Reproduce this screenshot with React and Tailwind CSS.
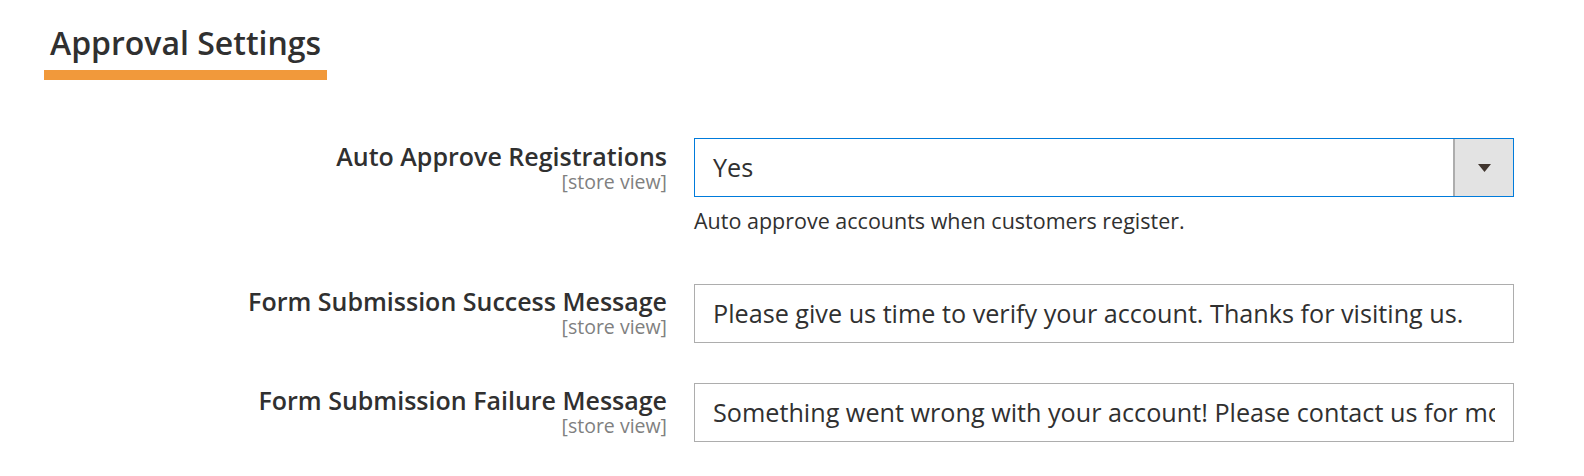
export default function App() {
  const font = { fontFamily: '"Open Sans", "Noto Sans", sans-serif' };
  return (
    <div className="w-[1584px] h-[476px] bg-white text-[#303030] overflow-hidden" style={font}>
      <div className="pl-[44px] pt-[18px]">
        <div className="inline-block">
          <h2 className="px-[6px] text-[32px] leading-[50px] font-semibold text-[#303030]">Approval Settings</h2>
          <div className="mt-[2px] h-[10px] bg-[#f1993b]" />
        </div>
      </div>

      <div className="mt-[58px] flex flex-col">
        <div className="flex items-start">
          <div className="w-[667px] flex flex-col items-end pt-[3px]">
            <div className="text-[25px] leading-[30px] font-semibold">Auto Approve Registrations</div>
            <div className="text-[19.5px] leading-[22px] text-[#808080]">[store view]</div>
          </div>
          <div className="ml-[27px] w-[820px] flex flex-col">
            <div className="h-[59px] flex border border-[#007bdb] bg-white">
              <div className="flex-1 flex items-center pl-[18px] text-[25.2px]">Yes</div>
              <div className="w-[60px] bg-[#e3e3e3] border-l-2 border-[#adadad] flex items-center justify-center">
                <svg width="13" height="8" viewBox="0 0 13 8">
                  <path d="M0 0 H13 L6.5 8 Z" fill="#41362f" />
                </svg>
              </div>
            </div>
            <div className="mt-[10px] text-[21.5px] leading-[28px]">Auto approve accounts when customers register.</div>
          </div>
        </div>

        <div className="mt-[49px] flex items-start">
          <div className="w-[667px] flex flex-col items-end pt-[2px]">
            <div className="text-[25px] leading-[30px] font-semibold">Form Submission Success Message</div>
            <div className="text-[19.5px] leading-[22px] text-[#808080]">[store view]</div>
          </div>
          <div className="ml-[27px] w-[820px] h-[59px] border border-[#adadad] flex items-center px-[18px]">
            <div className="w-full text-[25.2px] whitespace-nowrap overflow-hidden">Please give us time to verify your account. Thanks for visiting us.</div>
          </div>
        </div>

        <div className="mt-[40px] flex items-start">
          <div className="w-[667px] flex flex-col items-end pt-[2px]">
            <div className="text-[25px] leading-[30px] font-semibold">Form Submission Failure Message</div>
            <div className="text-[19.5px] leading-[22px] text-[#808080]">[store view]</div>
          </div>
          <div className="ml-[27px] w-[820px] h-[59px] border border-[#adadad] flex items-center px-[18px]">
            <div className="w-full text-[25.2px] whitespace-nowrap overflow-hidden">Something went wrong with your account! Please contact us for more information.</div>
          </div>
        </div>
      </div>
    </div>
  );
}
